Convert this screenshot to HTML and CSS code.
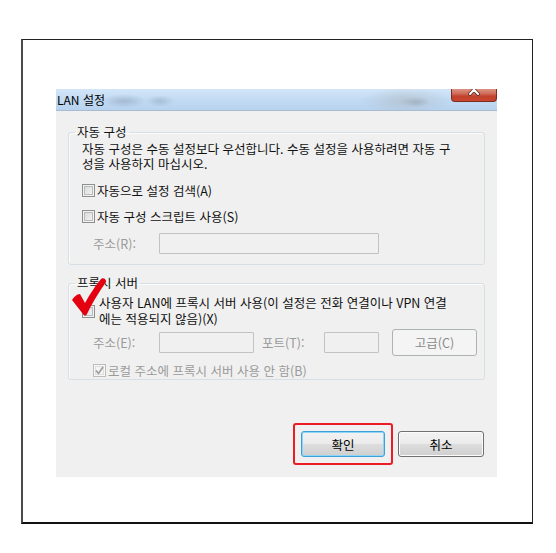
FILE: index.html
```html
<!DOCTYPE html>
<html lang="ko">
<head>
<meta charset="utf-8">
<link rel="stylesheet" href="styles.css">
</head>
<body>
<div class="frame">
  <div class="dialog">
    <div class="titlebar">
      <span class="title">LAN 설정</span>
      <span class="close">
        <svg width="44" height="11" viewBox="0 0 44 11"><path d="M18 -4 L26 5 M26 -4 L18 5" stroke="#5a2a22" stroke-width="3.6" stroke-linecap="round"/><path d="M18 -4 L26 5 M26 -4 L18 5" stroke="#ffffff" stroke-width="2" stroke-linecap="round"/></svg>
      </span>
    </div>
    <div class="content">
      <fieldset class="group g1">
        <legend>자동 구성</legend>
        <p class="desc">자동 구성은 수동 설정보다 우선합니다. 수동 설정을 사용하려면 자동 구<br>성을 사용하지 마십시오.</p>
        <div class="check r1"><span class="cb"></span><span>자동으로 설정 검색(A)</span></div>
        <div class="check r2"><span class="cb"></span><span>자동 구성 스크립트 사용(S)</span></div>
        <div class="addr a1"><span class="lbl">주소(R):</span><span class="field f-wide"></span></div>
      </fieldset>
      <fieldset class="group g2">
        <legend>프록시 서버</legend>
        <div class="check r3">
          <span class="cb"></span><span class="multi">사용자 LAN에 프록시 서버 사용(이 설정은 전화 연결이나 VPN 연결<br>에는 적용되지 않음)(X)</span>
          <svg class="tick" width="36" height="40" viewBox="0 0 36 40"><path d="M0 22 C2 19 5 16 8 16 L13 25 C18 16 24 7 29 1 C31 -1 35 2 34 4 C27 14 20 25 15 36 C14 38 12 38 11 36 Z" fill="#e3000f"/></svg>
        </div>
        <div class="addr a2">
          <span class="lbl">주소(E):</span><span class="field f-addr"></span>
          <span class="lbl2">포트(T):</span><span class="field f-port"></span>
          <span class="btn adv">고급(C)</span>
        </div>
        <div class="check r4 disabled"><span class="cb checked"><svg width="11" height="11" viewBox="0 0 11 11"><path d="M2 5.5 L4.5 8.5 L9 2" stroke="#9c9c9c" stroke-width="1.6" fill="none"/></svg></span><span>로컬 주소에 프록시 서버 사용 안 함(B)</span></div>
      </fieldset>
    </div>
    <div class="buttons">
      <div class="highlight"><span class="btn ok">확인</span></div>
      <span class="btn cancel">취소</span>
    </div>
  </div>
</div>
</body>
</html>
```
FILE: styles.css
```css
html, body { margin: 0; background: #fff; }
body {
  padding: 39px 0 0 21px;
  font-family: "Noto Sans CJK KR", "Liberation Sans", sans-serif;
  font-size: 12.5px;
  color: #111;
}
.frame {
  box-sizing: border-box;
  width: 512px;
  height: 485px;
  border: 1px solid #222;
  border-left: 2px solid #4a4a4a;
  border-bottom: 2px solid #111;
  padding: 49px 0 0 33px;
}
.dialog {
  width: 441px;
  height: 388px;
  background: #f0f0f0;
  display: flex;
  flex-direction: column;
}
.titlebar {
  box-sizing: border-box;
  height: 22px;
  display: flex;
  justify-content: space-between;
  align-items: flex-start;
  border-bottom: 1px solid #a9bccf;
  background:
    radial-gradient(ellipse 22px 7px at 68px 12px, rgba(110,130,150,0.35), rgba(110,130,150,0) 100%),
    radial-gradient(ellipse 14px 6px at 104px 12px, rgba(110,130,150,0.3), rgba(110,130,150,0) 100%),
    radial-gradient(ellipse 45px 14px at 350px 12px, rgba(170,180,190,0.55), rgba(170,180,190,0) 100%),
    radial-gradient(ellipse 14px 5px at 360px 13px, rgba(100,110,120,0.35), rgba(100,110,120,0) 100%),
    linear-gradient(to bottom, #d3e6f8 0%, #c2dbf3 50%, #b8d3ef 100%);
}
.title {
  font-size: 12px;
  line-height: 21px;
  padding-left: 1px;
  color: #000;
}
.close {
  box-sizing: border-box;
  width: 46px;
  height: 13px;
  border: 1px solid #7d2c20;
  border-top: none;
  border-radius: 0 0 4px 4px;
  background: linear-gradient(to bottom, #dc9383 0%, #cf6a57 40%, #c1412d 60%, #c9452f 100%);
  display: flex;
}
.content {
  padding: 0 12px;
}
.group {
  margin: 0;
  border: 1px solid #d5dfe5;
  border-radius: 3px;
  min-inline-size: auto;
  box-shadow: inset 1px 1px 0 #fbfcfd;
}
.group legend {
  margin-left: -7px;
  padding: 0 2px;
  line-height: 16px;
  font-size: 12.5px;
}
.g1 {
  margin-top: 13px;
  padding: 1px 6px 10px 13px;
}
.g2 {
  margin-top: 10px;
  padding: 0 6px 1px 13px;
}
.desc {
  margin: 0;
  line-height: 15px;
  white-space: nowrap;
}
.check {
  display: flex;
  align-items: center;
  gap: 2px;
  height: 18px;
  white-space: nowrap;
}
.r1 { margin-top: 10px; }
.r2 { margin-top: 8px; }
.r3 {
  margin-top: 4px;
  height: 32px;
  position: relative;
}
.multi { line-height: 16px; padding-left: 2px; }
.tick {
  position: absolute;
  left: -10px;
  top: -17px;
}
.r4 {
  margin-top: 6px;
  margin-left: 11px;
  height: 16px;
}
.disabled { color: #9a9a9a; }
.cb {
  box-sizing: border-box;
  flex: none;
  width: 13px;
  height: 13px;
  border: 1px solid #8e8f8f;
  background: linear-gradient(135deg, #d6d6d6 0%, #f6f6f6 100%);
  box-shadow: inset 0 0 0 1px #f2f2f2, inset 0 0 0 2px #b9bcbf;
  display: flex;
  align-items: center;
  justify-content: center;
}
.cb.checked {
  border-color: #bcbcbc;
  background: #f4f4f4;
  box-shadow: inset 0 0 0 1px #f7f7f7, inset 0 0 0 2px #dedede;
}
.addr {
  display: flex;
  align-items: center;
  margin-left: 11px;
  color: #9a9a9a;
}
.a1 { margin-top: 8px; height: 21px; }
.a2 { margin-top: 2px; height: 27px; }
.lbl { width: 66px; flex: none; }
.lbl2 { width: 62px; flex: none; margin-left: 8px; }
.field {
  box-sizing: border-box;
  flex: none;
  height: 21px;
  border: 1px solid #c2c2c2;
  border-radius: 1px;
  background: #f0f0f0;
}
.f-wide { width: 220px; }
.f-addr { width: 95px; }
.f-port { width: 55px; }
.btn {
  box-sizing: border-box;
  flex: none;
  height: 26px;
  display: flex;
  align-items: center;
  justify-content: center;
  border-radius: 3px;
  color: #000;
  font-size: 12.5px;
}
.adv {
  width: 85px;
  height: 27px;
  margin-left: 13px;
  border: 1px solid #adb2b5;
  background: #f4f4f4;
  color: #8a8a8a;
}
.buttons {
  margin-top: auto;
  padding: 0 13px 12px 0;
  display: flex;
  justify-content: flex-end;
  align-items: center;
  gap: 5px;
}
.highlight {
  border: 2px solid #ec1c24;
  border-radius: 3px;
  padding: 6px;
}
.ok {
  width: 84px;
  border: 1px solid #3c9fd9;
  box-shadow: inset 0 0 0 1px #8fd5f5;
  background: linear-gradient(to bottom, #f2f2f2 0%, #ebebeb 50%, #dddddd 51%, #cfcfcf 100%);
}
.cancel {
  width: 86px;
  border: 1px solid #707070;
  box-shadow: inset 0 0 0 1px #fbfbfb;
  background: linear-gradient(to bottom, #f2f2f2 0%, #ebebeb 50%, #dddddd 51%, #cfcfcf 100%);
}
```
